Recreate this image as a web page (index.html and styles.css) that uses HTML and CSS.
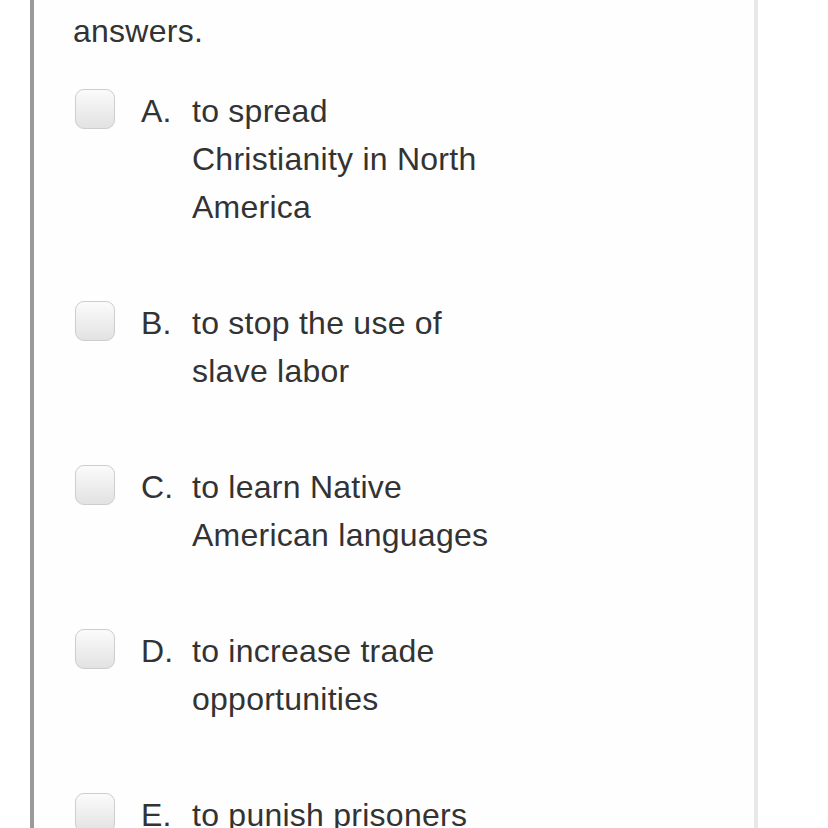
FILE: index.html
```html
<!DOCTYPE html>
<html lang="en">
<head>
<meta charset="utf-8">
<title>Question</title>
<link rel="stylesheet" href="styles.css">
</head>
<body>
<div class="frame">
  <p class="prompt">answers.</p>
  <ul class="options">
    <li class="option">
      <span class="box"></span>
      <span class="letter">A.</span>
      <span class="text">to spread Christianity in North America</span>
    </li>
    <li class="option">
      <span class="box"></span>
      <span class="letter">B.</span>
      <span class="text">to stop the use of slave labor</span>
    </li>
    <li class="option">
      <span class="box"></span>
      <span class="letter">C.</span>
      <span class="text">to learn Native American languages</span>
    </li>
    <li class="option">
      <span class="box"></span>
      <span class="letter">D.</span>
      <span class="text">to increase trade opportunities</span>
    </li>
    <li class="option">
      <span class="box"></span>
      <span class="letter">E.</span>
      <span class="text">to punish prisoners</span>
    </li>
  </ul>
</div>
</body>
</html>
```
FILE: styles.css
```css
html, body {
  margin: 0;
  padding: 0;
  background: #ffffff;
  height: 100%;
  overflow: hidden;
}
body {
  font-family: "Liberation Sans", Arial, Helvetica, sans-serif;
  font-size: 32px;
  line-height: 48px;
  letter-spacing: 0.25px;
  color: #333333;
}
.frame {
  margin-left: 30px;
  width: 728px;
  min-height: 1200px;
  box-sizing: border-box;
  border-left: 4px solid #9a9a9a;
  border-right: 4px solid #e8e8e8;
  background: #fefefe;
  padding: 7px 0 0 39px;
}
.prompt {
  margin: 0 0 32px 0;
}
.options {
  list-style: none;
  margin: 0;
  padding: 0;
}
.option {
  display: flex;
  align-items: flex-start;
  margin-bottom: 68px;
}
.box {
  flex: none;
  width: 40px;
  height: 40px;
  margin: 2px 26px 0 2px;
  box-sizing: border-box;
  border: 1.5px solid #cdcdcd;
  border-radius: 9px;
  background: linear-gradient(#fbfbfb, #e2e2e2);
}
.letter {
  flex: none;
  width: 51px;
}
.text {
  width: 302px;
}
```
